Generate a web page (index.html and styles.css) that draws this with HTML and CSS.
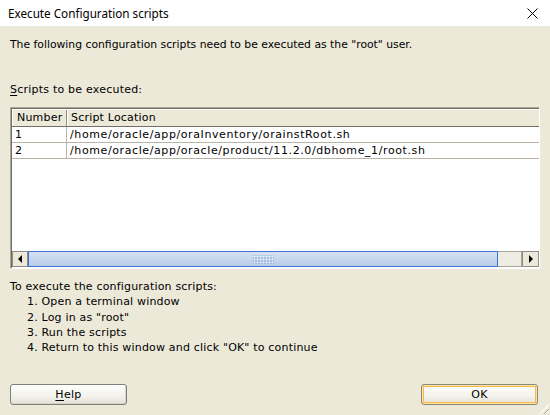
FILE: index.html
```html
<!DOCTYPE html>
<html>
<head>
<meta charset="utf-8">
<link rel="stylesheet" href="styles.css">
</head>
<body>
<div class="dialog">
  <div class="titlebar">
    <span class="title">Execute Configuration scripts</span>
    <svg class="close" width="11" height="11" viewBox="0 0 11 11"><path d="M0.5 0.5 L10.5 10.5 M10.5 0.5 L0.5 10.5" stroke="#000" stroke-width="1" fill="none"/></svg>
  </div>
  <div class="body">
    <p class="intro">The following configuration scripts need to be executed as the "root" user.</p>
    <p class="label"><u>S</u>cripts to be executed:</p>
    <div class="pane">
      <div class="viewport">
        <div class="row header">
          <div class="cell c1">Number</div>
          <div class="cell c2">Script Location</div>
        </div>
        <div class="row">
          <div class="cell c1">1</div>
          <div class="cell c2">/home/oracle/app/oraInventory/orainstRoot.sh</div>
        </div>
        <div class="row">
          <div class="cell c1">2</div>
          <div class="cell c2">/home/oracle/app/oracle/product/11.2.0/dbhome_1/root.sh</div>
        </div>
        <div class="spacer"></div>
      </div>
      <div class="hscroll">
        <div class="arrow left"><span class="tri-l"></span></div>
        <div class="thumb"><span class="grip"></span></div>
        <div class="track"></div>
        <div class="arrow right"><span class="tri-r"></span></div>
      </div>
    </div>
    <div class="steps">
      <div>To execute the configuration scripts:</div>
      <ol>
        <li>1. Open a terminal window</li>
        <li>2. Log in as "root"</li>
        <li>3. Run the scripts</li>
        <li>4. Return to this window and click "OK" to continue</li>
      </ol>
    </div>
    <div class="footer">
      <button class="btn"><u>H</u>elp</button>
      <button class="btn default">OK</button>
    </div>
  </div>
  <div class="grip-corner"></div>
</div>
</body>
</html>
```

FILE: styles.css
```css
* { box-sizing: border-box; }
html, body { margin: 0; padding: 0; }
body {
  width: 550px;
  height: 415px;
  overflow: hidden;
  background: #ECE9D8;
  font-family: "DejaVu Sans", sans-serif;
  font-size: 11px;
  color: #000;
}
.dialog {
  position: relative;
  width: 550px;
  height: 415px;
  display: flex;
  flex-direction: column;
}
.titlebar {
  height: 26px;
  background: #fff;
  display: flex;
  align-items: center;
  justify-content: space-between;
  padding: 0 12px 0 8px;
  font-family: "Noto Sans", sans-serif;
  font-size: 11.7px;
}
.title { margin-top: -1px; }
.close { display: block; }
.body {
  flex: 1;
  display: flex;
  flex-direction: column;
  padding: 0 10px 10px 10px;
}
p { margin: 0; }
.intro { margin-top: 11px; line-height: 15px; font-size: 10.8px; }
.label { margin-top: 30px; line-height: 15px; letter-spacing: 0.22px; }
.label u { text-decoration: underline; text-underline-offset: 2px; }
.pane {
  margin-top: 10px;
  width: 530px;
  height: 162px;
  border: 1px solid;
  border-color: #ACA899 #fff #fff #ACA899;
  display: flex;
  flex-direction: column;
}
.viewport {
  flex: 1;
  background: #fff;
  border-top: 1px solid #716F64;
  border-left: 1px solid #716F64;
  display: flex;
  flex-direction: column;
  overflow: hidden;
}
.hscroll {
  height: 17px;
  display: flex;
  border-left: 1px solid #716F64;
  background: #fff;
  padding-bottom: 1px;
}
.row {
  display: flex;
  height: 16px;
  border-bottom: 1px solid #B8B5A8;
  line-height: 15px;
  white-space: nowrap;
  letter-spacing: 0.6px;
}
.row .cell { padding-left: 3px; }
.row .c1 { width: 55px; border-right: 1px solid #B8B5A8; }
.row .c2 { flex: 1; padding-left: 3px; }
.row.header {
  height: 18px;
  background: #ECE9D8;
  border-top: 1px solid #fff;
  border-bottom: 1px solid #716F64;
  line-height: 16px;
  letter-spacing: 0.2px;
}
.row.header .cell { padding-left: 4px; }
.row.header .c1 { border-right: 1px solid #8F8D80; border-left: 1px solid #fff; }
.row.header .c2 { border-left: 1px solid #fff; padding-left: 3px; margin-right: 1px; }
.spacer { flex: 1; }
.arrow {
  width: 16px;
  height: 16px;
  background: #ECE9D8;
  border: 1px solid #8E8C84;
  display: flex;
  align-items: center;
  justify-content: center;
}
.arrow.right { width: 17px; }
.tri-l {
  width: 0; height: 0;
  border-top: 4px solid transparent;
  border-bottom: 4px solid transparent;
  border-right: 4px solid #000;
}
.tri-r {
  width: 0; height: 0;
  border-top: 4px solid transparent;
  border-bottom: 4px solid transparent;
  border-left: 4px solid #000;
}
.thumb {
  width: 470px;
  height: 16px;
  border: 1px solid #3C73D1;
  background: linear-gradient(#D6E2F2, #C3D4EB 60%, #B9CCE6);
  display: flex;
  align-items: center;
  justify-content: center;
}
.grip {
  width: 21px;
  height: 9px;
  background-image:
    radial-gradient(circle, #F4F8FD 0.6px, transparent 0.8px),
    radial-gradient(circle, #5A82C8 0.6px, transparent 0.8px);
  background-size: 3px 3px, 3px 3px;
  background-position: 0 0, 1.5px 1.5px;
}
.track {
  width: 24px;
  height: 16px;
  background: #EEEDE4;
  border: 1px solid #A8A69C;
  border-left: none;
}
.steps {
  margin-top: 10px;
  line-height: 15.25px;
  letter-spacing: 0.18px;
}
.steps ol {
  list-style: none;
  margin: 0;
  padding: 0 0 0 17px;
}
.footer {
  margin-top: auto;
  display: flex;
  justify-content: space-between;
  padding-right: 2px;
}
.btn {
  width: 117px;
  height: 21px;
  font-family: "DejaVu Sans", sans-serif;
  font-size: 11px;
  letter-spacing: 0.3px;
  color: #000;
  border: 1px solid #7F7F7F;
  border-radius: 3px;
  background: linear-gradient(#FEFEFD, #F3F2EC 60%, #E2E0D6);
  padding: 0;
  box-shadow: inset -1px -1px 0 #D6D3C6;
}
.btn u { text-underline-offset: 2px; }
.btn.default {
  border-color: #8A8678;
  box-shadow: inset 0 0 0 1px #FFE7A2, inset 0 0 0 2px #F8B84A;
}
.grip-corner {
  position: absolute;
  right: 1px;
  bottom: 1px;
  width: 10px;
  height: 10px;
  background: repeating-linear-gradient(135deg, transparent 0 2px, #A9A698 2px 3px, #fff 3px 4px);
  clip-path: polygon(100% 0, 100% 100%, 0 100%);
}
```
